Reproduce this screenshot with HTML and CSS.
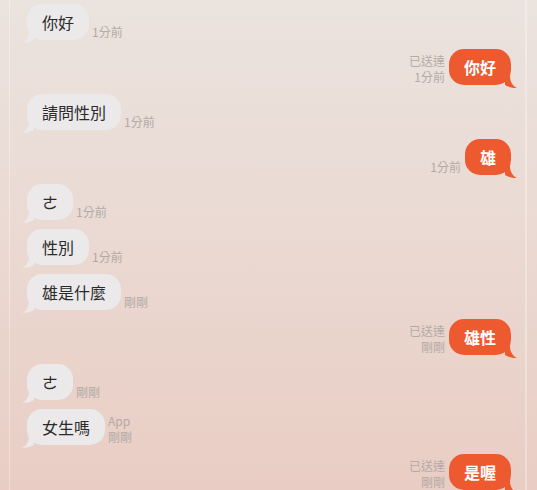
FILE: index.html
```html
<!DOCTYPE html>
<html lang="zh-Hant">
<head>
    <meta charset="UTF-8">
    <meta name="viewport" content="width=device-width, initial-scale=1.0">
    <title>聊天</title>
    <link rel="stylesheet" href="styles.css">
</head>
<body>
    <div class="chat">
        <div class="row in">
            <div class="bubble">你好</div>
            <div class="meta">1分前</div>
        </div>
        <div class="row me">
            <div class="meta">已送達<br>1分前</div>
            <div class="bubble">你好</div>
        </div>
        <div class="row in">
            <div class="bubble">請問性別</div>
            <div class="meta">1分前</div>
        </div>
        <div class="row me">
            <div class="meta">1分前</div>
            <div class="bubble">雄</div>
        </div>
        <div class="row in">
            <div class="bubble">ㄜ</div>
            <div class="meta">1分前</div>
        </div>
        <div class="row in">
            <div class="bubble">性別</div>
            <div class="meta">1分前</div>
        </div>
        <div class="row in">
            <div class="bubble">雄是什麼</div>
            <div class="meta">剛剛</div>
        </div>
        <div class="row me">
            <div class="meta">已送達<br>剛剛</div>
            <div class="bubble">雄性</div>
        </div>
        <div class="row in">
            <div class="bubble">ㄜ</div>
            <div class="meta">剛剛</div>
        </div>
        <div class="row in">
            <div class="bubble">女生嗎</div>
            <div class="meta">App<br>剛剛</div>
        </div>
        <div class="row me">
            <div class="meta">已送達<br>剛剛</div>
            <div class="bubble">是喔</div>
        </div>
    </div>
</body>
</html>
```

FILE: styles.css
```css
body {
    margin: 0;
    font-family: "Noto Sans CJK TC", "Noto Sans", sans-serif;
    background: linear-gradient(180deg, #ebe3de 0%, #eadad3 45%, #e9cdc4 100%);
    color: #2b2b2b;
    height: 490px;
    overflow: hidden;
}
.chat {
    margin-left: 9px;
    width: 518px;
    height: 490px;
    box-sizing: border-box;
    padding: 4px 14px 0 17px;
    border-left: 1px solid rgba(255, 255, 255, 0.35);
    border-right: 2px solid rgba(255, 255, 255, 0.3);
}
.row {
    display: flex;
    align-items: flex-end;
    gap: 3px;
    margin-bottom: 9px;
}
.row.me {
    justify-content: flex-end;
    gap: 4px;
}
.bubble {
    position: relative;
    height: 36px;
    line-height: 36px;
    padding: 0 15px;
    border-radius: 15px;
    font-size: 16px;
    background: #ebe9ea;
}
.bubble::after {
    content: "";
    position: absolute;
    bottom: -3px;
    width: 12px;
    height: 12px;
    background: inherit;
}
.in .bubble::after {
    left: -5px;
    clip-path: path("M0 12 C4 10 7 6 7 0 L12 0 L12 9 C9 11 4 12 0 12 Z");
}
.me .bubble {
    background: #ee5a30;
    color: #fff;
    font-weight: bold;
}
.me .bubble::after {
    right: -6px;
    clip-path: path("M12 12 C8 10 5 6 5 0 L0 0 L0 9 C3 11 8 12 12 12 Z");
}
.meta {
    font-size: 12px;
    line-height: 16px;
    color: #b3aaa6;
}
.me .meta {
    text-align: right;
}
```
